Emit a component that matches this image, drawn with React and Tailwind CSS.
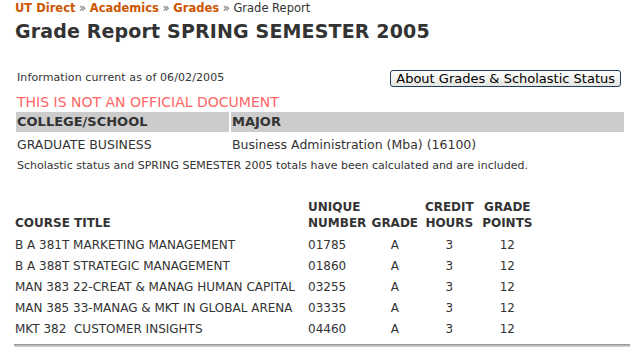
import React from "react";

const courses = [
  { title: "B A 381T MARKETING MANAGEMENT", unique: "01785", grade: "A", hours: "3", points: "12" },
  { title: "B A 388T STRATEGIC MANAGEMENT", unique: "01860", grade: "A", hours: "3", points: "12" },
  { title: "MAN 383 22-CREAT & MANAG HUMAN CAPITAL", unique: "03255", grade: "A", hours: "3", points: "12" },
  { title: "MAN 385 33-MANAG & MKT IN GLOBAL ARENA", unique: "03335", grade: "A", hours: "3", points: "12" },
  { title: "MKT 382\u00a0 CUSTOMER INSIGHTS", unique: "04460", grade: "A", hours: "3", points: "12" },
];

const GradeReport = () => {
  return (
    <div className="min-h-screen bg-white pl-[14px] pt-[2px] text-[#333] font-['DejaVu_Sans',Verdana,sans-serif]">
      {/* Breadcrumb */}
      <div className="pl-px text-[11.5px] leading-[13px]">
        <a className="font-bold text-[#cc5500]">UT Direct</a>
        <span className="text-[#666]"> » </span>
        <a className="font-bold text-[#cc5500]">Academics</a>
        <span className="text-[#666]"> » </span>
        <a className="font-bold text-[#cc5500]">Grades</a>
        <span className="text-[#666]"> » </span>
        <span>Grade Report</span>
      </div>

      <h1 className="mt-[5px] pl-px text-[19px] leading-[22px] font-bold tracking-[0.15px]">Grade Report SPRING SEMESTER 2005</h1>

      <div className="mt-[28px] mr-[6px] flex items-center justify-between pl-[3px]">
        <span className="text-[11px] tracking-[0.1px]">Information current as of 06/02/2005</span>
        <button className="mr-[3px] h-[17px] rounded-[3px] border border-[#1c3f66] bg-gradient-to-b from-white to-[#e6e6e0] px-[5px] text-[13px] leading-[14px] text-black">
          About Grades &amp; Scholastic Status
        </button>
      </div>

      <div className="mt-[7px] pl-[3px] text-[14px] leading-[16px] text-[#ff6666]">THIS IS NOT AN OFFICIAL DOCUMENT</div>

      <table className="w-[612px] border-separate border-spacing-[2px] text-[12.5px]">
        <thead>
          <tr className="bg-[#cccccc] text-[13px] font-bold">
            <th className="h-[20px] w-[213px] px-[1px] text-left">COLLEGE/SCHOOL</th>
            <th className="h-[20px] px-[1px] text-left">MAJOR</th>
          </tr>
        </thead>
        <tbody>
          <tr>
            <td className="h-[23px] px-[1px]">GRADUATE BUSINESS</td>
            <td className="h-[23px] px-[1px]">Business Administration (Mba) (16100)</td>
          </tr>
        </tbody>
      </table>

      <div className="pl-[3px] text-[11px] leading-[14px]">
        Scholastic status and SPRING SEMESTER 2005 totals have been calculated and are included.
      </div>

      <table className="mt-[26px] border-collapse text-[12px]">
        <thead>
          <tr className="font-bold leading-[16px] align-bottom">
            <th className="w-[293px] px-[1px] pb-[3px] text-left">COURSE TITLE</th>
            <th className="w-[58px] px-[1px] pb-[3px] text-left">UNIQUE<br />NUMBER</th>
            <th className="w-[55px] px-0 pb-[3px] text-center">GRADE</th>
            <th className="w-[54px] px-0 pb-[3px] text-center">CREDIT<br />HOURS</th>
            <th className="w-[62px] px-0 pb-[3px] text-center">GRADE<br />POINTS</th>
          </tr>
        </thead>
        <tbody>
          {courses.map((c) => (
            <tr key={c.unique} className="h-[21px]">
              <td className="px-[1px] whitespace-nowrap">{c.title}</td>
              <td className="px-[1px]">{c.unique}</td>
              <td className="text-center">{c.grade}</td>
              <td className="text-center">{c.hours}</td>
              <td className="text-center">{c.points}</td>
            </tr>
          ))}
        </tbody>
      </table>

      <div className="mt-[5px] h-[3px] border-t border-b border-t-[#999] border-b-[#ccc] bg-[#bbb]" />
    </div>
  );
};

export default GradeReport;
